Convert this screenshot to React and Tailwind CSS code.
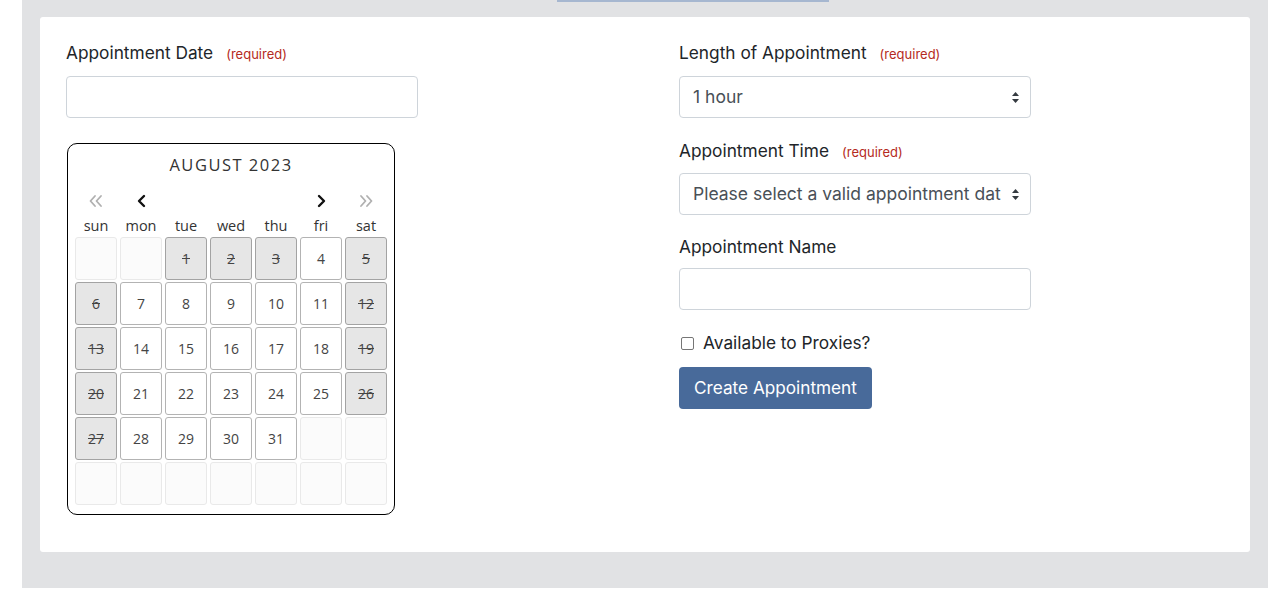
import React from 'react';

const DAYS = ['sun', 'mon', 'tue', 'wed', 'thu', 'fri', 'sat'];

// August 2023 starts on a Tuesday; weekends and the first three days are blocked
const BLOCKED = [1, 2, 3, 5, 6, 12, 13, 19, 20, 26, 27];

function buildCells() {
  const cells = [];
  for (let i = 0; i < 2; i++) cells.push(null);
  for (let d = 1; d <= 31; d++) cells.push(d);
  while (cells.length < 42) cells.push(null);
  return cells;
}

function Chevron({ dir = 'left', double = false }) {
  const single = dir === 'left' ? 'M8 2 L3 7 L8 12' : 'M3 2 L8 7 L3 12';
  if (!double) {
    return (
      <svg width="11" height="14" viewBox="0 0 11 14" className="inline-block">
        <path d={single} fill="none" stroke="#111" strokeWidth="2.4" strokeLinecap="round" strokeLinejoin="round" />
      </svg>
    );
  }
  const paths =
    dir === 'left'
      ? ['M7 2 L2.5 7 L7 12', 'M13 2 L8.5 7 L13 12']
      : ['M3 2 L7.5 7 L3 12', 'M9 2 L13.5 7 L9 12'];
  return (
    <svg width="16" height="14" viewBox="0 0 16 14" className="inline-block">
      {paths.map((p) => (
        <path key={p} d={p} fill="none" stroke="#b0b0b0" strokeWidth="1.8" strokeLinecap="round" strokeLinejoin="round" />
      ))}
    </svg>
  );
}

function SelectArrows() {
  return (
    <svg width="9" height="13" viewBox="0 0 9 13">
      <path d="M4.5 1 L8 5 L1 5 Z" fill="#343a40" />
      <path d="M4.5 12 L8 8 L1 8 Z" fill="#343a40" />
    </svg>
  );
}

function Calendar() {
  const cells = buildCells();
  return (
    <div className="ml-px mt-[25px] w-[328px] h-[372px] border border-black rounded-[10px] px-[7px] pt-[10px] font-['Open_Sans',sans-serif] text-[#444]">
      <div className="text-center text-[16.5px] leading-[22px] tracking-[1.5px] text-[#333]">AUGUST 2023</div>
      <div className="grid grid-cols-7 gap-x-[3px] mt-[15px] h-[20px] items-center">
        <div className="flex justify-center"><Chevron dir="left" double /></div>
        <div className="flex justify-center"><Chevron dir="left" /></div>
        <div />
        <div />
        <div />
        <div className="flex justify-center"><Chevron dir="right" /></div>
        <div className="flex justify-center"><Chevron dir="right" double /></div>
      </div>
      <div className="grid grid-cols-7 gap-x-[3px] mt-[6px] mb-[2px]">
        {DAYS.map((d) => (
          <div key={d} className="text-center text-[14.5px] leading-[18px] text-[#333]">{d}</div>
        ))}
      </div>
      <div className="grid grid-cols-[repeat(7,42px)] gap-x-[3px] gap-y-[2px]">
        {cells.map((d, i) => {
          if (d === null) {
            return <div key={i} className="h-[43px] rounded-[3px] border border-[#e9e9e9] bg-[#fbfbfb]" />;
          }
          const blocked = BLOCKED.includes(d);
          return (
            <div
              key={i}
              className={
                blocked
                  ? 'h-[43px] rounded-[3px] border border-[#a3a3a3] bg-[#e6e6e6] flex items-center justify-center text-[14px] line-through'
                  : 'h-[43px] rounded-[3px] border border-[#b3b3b3] bg-white flex items-center justify-center text-[14px]'
              }
            >
              {d}
            </div>
          );
        })}
      </div>
    </div>
  );
}

function Label({ children, required, className = '' }) {
  return (
    <div className={'text-[17.3px] leading-[24px] text-[#212529] ' + className}>
      {children}
      {required && <span className="ml-[13px] text-[13px] text-[#b52a22]">(required)</span>}
    </div>
  );
}

function SelectBox({ children }) {
  return (
    <div className="w-[352px] h-[42px] border border-[#ced4da] rounded-[4px] bg-white flex items-center pl-[13px] text-[17.5px] text-[#495057]">
      <span className="w-[308px] whitespace-nowrap overflow-hidden">{children}</span>
      <span className="ml-[10px] flex items-center"><SelectArrows /></span>
    </div>
  );
}

export default function App() {
  return (
    <div className="bg-white min-h-[600px] font-['Inter',sans-serif]">
      <div className="ml-[22px] w-[1246px] h-[588px] bg-[#e1e2e4]">
        <div className="ml-[535px] w-[272px] h-[2px] bg-[#a6b7d0]" />
        <div className="ml-[18px] mt-[15px] w-[1210px] h-[535px] bg-white rounded-[3px] pt-[24px] pl-[26px] grid grid-cols-[613px_1fr]">
          <div>
            <Label required>Appointment Date</Label>
            <div className="mt-[10px] w-[352px] h-[42px] border border-[#ced4da] rounded-[4px] bg-white" />
            <Calendar />
          </div>
          <div>
            <Label required>Length of Appointment</Label>
            <div className="mt-[10px]">
              <SelectBox>1 hour</SelectBox>
            </div>
            <Label required className="mt-[21px]">Appointment Time</Label>
            <div className="mt-[9px]">
              <SelectBox>Please select a valid appointment date</SelectBox>
            </div>
            <Label className="mt-[20px]">Appointment Name</Label>
            <div className="mt-[9px] w-[352px] h-[42px] border border-[#ced4da] rounded-[4px] bg-white" />
            <label className="mt-[21px] flex items-center h-[24px] text-[17.3px] text-[#212529]">
              <span className="ml-[2px] w-[13px] h-[13px] border border-[#767676] rounded-[2px] bg-white" />
              <span className="ml-[9px]">Available to Proxies?</span>
            </label>
            <button className="mt-[12px] h-[42px] px-[15px] rounded-[4px] bg-[#486a9a] text-white text-[17.2px]">
              Create Appointment
            </button>
          </div>
        </div>
      </div>
    </div>
  );
}
